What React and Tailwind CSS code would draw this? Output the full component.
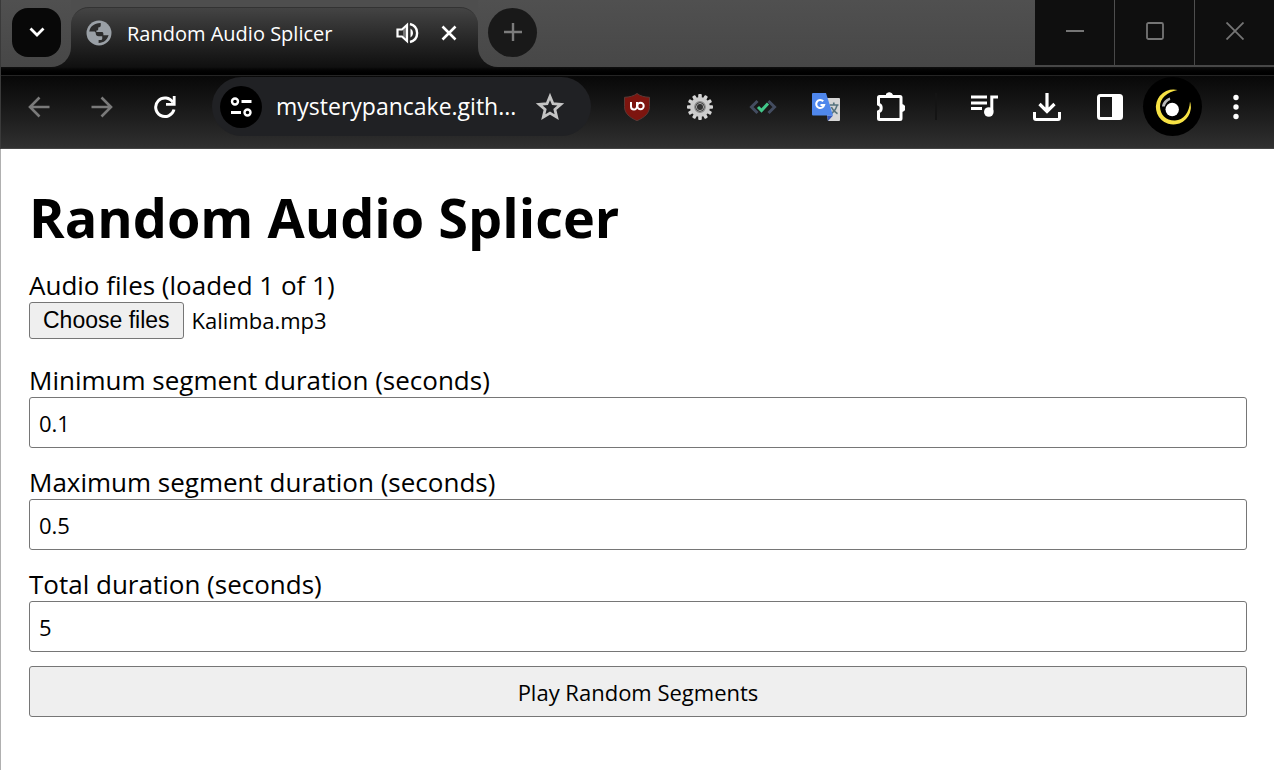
import { useRef } from "react";

function Icon({ size = 24, children, className = "" }) {
  return (
    <svg
      width={size}
      height={size}
      viewBox={`0 0 ${size} ${size}`}
      fill="none"
      stroke="currentColor"
      className={`shrink-0 ${className}`}
      aria-hidden="true"
    >
      {children}
    </svg>
  );
}

function ToolButton({ label, children, className = "text-white" }) {
  return (
    <button
      type="button"
      aria-label={label}
      className={`flex h-[59px] w-[63px] shrink-0 items-center justify-center ${className}`}
    >
      {children}
    </button>
  );
}

function WindowButton({ label, children }) {
  return (
    <button
      type="button"
      aria-label={label}
      className="flex h-[65px] flex-1 items-center justify-center bg-[#0f0f0f] pb-1 text-[#757575]"
    >
      {children}
    </button>
  );
}

function TabStrip() {
  return (
    <div className="flex h-[67px] bg-[linear-gradient(to_bottom,#444444_7px,#101010_67px)]">
      <div className="w-[70px] shrink-0 rounded-br-[20px] bg-linear-to-b from-[#505050] to-[#474747] pt-2 pl-[11px]">
        <button
          type="button"
          aria-label="Search tabs"
          className="flex size-[49px] items-center justify-center rounded-[16px] bg-[#080808] pb-px text-white"
        >
          <Icon size={18}>
            <path d="M2.500 5.500l6.500 6.500 6.500-6.500" strokeWidth="2.800" />
          </Icon>
        </button>
      </div>

      <div className="w-[407px] shrink-0 bg-[linear-gradient(to_bottom,#4e4e4e_30px,#101010_31px)] pt-[7px]">
        <div className="flex h-[60px] items-center rounded-t-[18px] border-t border-[#333333] bg-linear-to-b from-[#444444] to-[#101010] pr-[20px] pb-[9px] pl-[13px]">
          <svg width="30" height="30" viewBox="0 0 24 24" className="shrink-0" aria-hidden="true">
            <circle cx="12" cy="12" r="10" fill="#9aa0a6" />
            <path
              fill="#2c2c2c"
              d="M4.200 10.800C4.900 6.800 8.500 3.900 13.400 4.100v1.600c0 1.100-.8 1.800-2 1.800v1.300c0 .8-.6 1.200-1.500 1.200v1.200h4.300c.8 0 1.300.5 1.300 1.300v1.200c1.400 0 2.600.2 4.100-.2-.8 3.700-3.700 6.300-7.900 6.400v-2.400h1.700c.8 0 1.200-.5 1.200-1.200v-1.800h-2.800c-1.600 0-2.400-.8-2.400-2.300 0-.9-.6-1.400-1.500-1.400z"
            />
          </svg>
          <span className="ml-[13px] flex-1 truncate pt-[2px] font-['Open_Sans','Noto_Sans',sans-serif] text-[20px] text-white">
            Random Audio Splicer
          </span>
          <button type="button" aria-label="Mute tab" className="text-white">
            <Icon size={24}>
              <path d="M2.500 8.500h4.500l5-4.500v16l-5-4.500H2.500z" strokeWidth="2.200" />
              <path d="M8 8.700l4.500-4.500v15.600L8 15.300z" fill="currentColor" fillOpacity=".35" stroke="none" />
              <path d="M15.500 7.500c3.300 2 3.300 7 0 9z" fill="currentColor" stroke="none" />
              <path d="M15 3c9.500 2.500 9.500 15.500 0 18" strokeWidth="2.400" />
            </Icon>
          </button>
          <button type="button" aria-label="Close tab" className="ml-[21px] text-white">
            <Icon size={18}>
              <path d="M2.500 2.500l13 13M15.500 2.500l-13 13" strokeWidth="2.600" />
            </Icon>
          </button>
        </div>
      </div>

      <div className="flex flex-1 justify-between rounded-bl-[20px] bg-linear-to-b from-[#505050] to-[#474747]">
        <button
          type="button"
          aria-label="New tab"
          className="mt-2 ml-[10px] flex size-[49px] items-center justify-center rounded-full bg-[#191919] pb-px text-[#7c7c7c]"
        >
          <Icon size={20}>
            <path d="M10 1v18M1 10h18" strokeWidth="2.400" />
          </Icon>
        </button>
        <div className="flex w-[239px] gap-px">
          <WindowButton label="Minimize">
            <Icon size={18}>
              <path d="M0 9h18" strokeWidth="2" />
            </Icon>
          </WindowButton>
          <WindowButton label="Maximize">
            <Icon size={18}>
              <rect x="1" y="1" width="16" height="16" rx="1.500" strokeWidth="1.800" />
            </Icon>
          </WindowButton>
          <WindowButton label="Close">
            <Icon size={18}>
              <path d="M.5.5l17 17M17.500.5l-17 17" strokeWidth="1.800" />
            </Icon>
          </WindowButton>
        </div>
      </div>
    </div>
  );
}

const gearTeeth = Array.from({ length: 12 }, (_, i) => i * 30);

function Toolbar() {
  return (
    <div className="flex h-[74px] items-start border-t border-b border-t-[#242424] border-b-[#444444] bg-linear-to-b from-[#080808] to-[#303030] pt-px pr-[7px] pl-[6px]">
      <ToolButton label="Back" className="text-[#7a7a7a]">
        <Icon size={24}>
          <path d="M22.500 12H3M12.500 2.500L3 12l9.500 9.500" strokeWidth="2.600" />
        </Icon>
      </ToolButton>
      <ToolButton label="Forward" className="text-[#7a7a7a]">
        <Icon size={24}>
          <path d="M1.500 12H21M11.500 2.500L21 12l-9.500 9.500" strokeWidth="2.600" />
        </Icon>
      </ToolButton>
      <ToolButton label="Reload">
        <Icon size={24}>
          <path d="M21 14.500A9.300 9.300 0 1 1 20 7.500" strokeWidth="3" />
          <path d="M21.200 1v8.400H13" strokeWidth="2.800" />
        </Icon>
      </ToolButton>

      <div className="mr-[14px] ml-[16px] flex h-[59px] min-w-0 flex-1 items-center rounded-full bg-[#202124] pr-[26px] pl-[8px]">
        <button
          type="button"
          aria-label="View site information"
          className="flex size-[42px] shrink-0 items-center justify-center rounded-full bg-black text-white"
        >
          <Icon size={24}>
            <circle cx="6" cy="6.500" r="3" strokeWidth="2.400" />
            <path d="M12.500 6.500h10M2 17.500h10" strokeWidth="2.800" />
            <circle cx="18.500" cy="17.500" r="3" strokeWidth="2.400" />
          </Icon>
        </button>
        <input
          type="text"
          aria-label="Address"
          defaultValue="mysterypancake.gith..."
          className="ml-[14px] min-w-0 flex-1 bg-transparent font-['Open_Sans','Noto_Sans',sans-serif] text-[23px] text-white outline-none"
        />
        <button type="button" aria-label="Bookmark this page" className="text-[#c4c4c4]">
          <Icon size={30}>
            <path
              d="M15 4.500l3 7.200 7.800.7-5.900 5.100 1.800 7.600-6.700-4-6.700 4 1.800-7.600-5.900-5.100 7.800-.7z"
              strokeWidth="2.800"
            />
          </Icon>
        </button>
      </div>

      <ToolButton label="uBlock Origin">
        <Icon size={28}>
          <path
            d="M14 .5c3.500 2.600 7.500 3.600 12.500 3.800v9.200c0 7-5 10.800-12.500 14.200C6.500 24.300 1.500 20.500 1.500 13.500V4.300C6.500 4.100 10.500 3.100 14 .5z"
            fill="#7d150f"
            stroke="#5a3835"
            strokeWidth="1"
          />
          <path d="M8 9v4.500a3 3 0 0 0 6 0V9" strokeWidth="2" />
          <circle cx="17.500" cy="13" r="3.200" strokeWidth="2" />
        </Icon>
      </ToolButton>
      <ToolButton label="Settings extension">
        <Icon size={28}>
          <g fill="#d4d4d4" stroke="none">
            {gearTeeth.map((angle) => (
              <rect key={angle} x="12.200" y="1" width="3.600" height="6" rx="1" transform={`rotate(${angle} 14 14)`} />
            ))}
          </g>
          <circle cx="14" cy="14" r="7.500" stroke="#cccccc" strokeWidth="5" />
          <circle cx="14" cy="14" r="5.200" stroke="#8c8c8c" strokeWidth="1.400" />
          <circle cx="14" cy="14" r="3.600" fill="#303030" stroke="#a8a8a8" strokeWidth="1" />
        </Icon>
      </ToolButton>
      <ToolButton label="Code checker">
        <Icon size={28}>
          <path d="M8.500 8L2.500 14l6 6M19.500 8l6 6-6 6" stroke="#434c60" strokeWidth="3" />
          <path d="M9 14l3.500 3.500 6.500-7" stroke="#42c78a" strokeWidth="3" />
        </Icon>
      </ToolButton>
      <ToolButton label="Translate">
        <Icon size={28}>
          <path d="M12 5h15a1 1 0 0 1 1 1v21a1 1 0 0 1-1 1H16z" fill="#d6d6d6" stroke="none" />
          <path d="M15 22.500h6L16 28z" fill="#3354b8" stroke="none" />
          <path
            d="M17.500 12h9M21.800 9.500V12M25 12c-.5 3.500-3 6.500-5.500 8.500M19.300 14c1.500 3.300 3.500 5.300 6.200 6.800"
            stroke="#56737d"
            strokeWidth="1.700"
          />
          <path d="M1 0h13l7 22.500H1a1 1 0 0 1-1-1V1a1 1 0 0 1 1-1z" fill="#4f87ec" stroke="none" />
          <path d="M11.200 8.300a4 4 0 1 0 .9 3.700H8.500" stroke="#ffffff" strokeWidth="2.100" />
        </Icon>
      </ToolButton>
      <ToolButton label="Extensions">
        <Icon size={32}>
          <path
            d="M6.500 5.500H27a1 1 0 0 1 1 1v21a1 1 0 0 1-1 1H6.500a1 1 0 0 1-1-1v-6.700c3.600-1 3.600-6.600 0-7.600V6.500a1 1 0 0 1 1-1z"
            strokeWidth="3"
          />
          <path d="M13 5a3.300 3.300 0 0 1 6.600 0zM28.500 13.500a3.500 3.500 0 0 1 0 7z" fill="currentColor" strokeWidth="1" />
        </Icon>
      </ToolButton>
      <div className="flex h-[59px] w-[32px] shrink-0 items-center justify-center">
        <div className="h-[27px] w-[2px] bg-[#141414]" />
      </div>
      <ToolButton label="Media controls">
        <Icon size={28}>
          <path d="M1 4h16M1 10h16M1 15.500h11" strokeWidth="2.800" />
          <path d="M21.800 18.500V4H28" strokeWidth="3" />
          <circle cx="18.800" cy="19" r="4.800" fill="currentColor" stroke="none" />
        </Icon>
      </ToolButton>
      <ToolButton label="Downloads">
        <Icon size={30}>
          <path d="M15 1v18M7.500 12l7.500 7.500 7.500-7.500" strokeWidth="3.200" />
          <path d="M2.500 20v6a1.500 1.500 0 0 0 1.500 1.500h22a1.500 1.500 0 0 0 1.500-1.500v-6" strokeWidth="3" />
        </Icon>
      </ToolButton>
      <ToolButton label="Side panel">
        <Icon size={28}>
          <rect x="2.500" y="2.500" width="23" height="23" rx="2" strokeWidth="3" />
          <path d="M16 2h9v24h-9z" fill="currentColor" stroke="none" />
        </Icon>
      </ToolButton>
      <ToolButton label="Profile">
        <span className="flex size-[59px] items-center justify-center rounded-full bg-black">
          <Icon size={36}>
            <path
              d="M22.500 1A17.500 17.500 0 1 0 35 12.500C34.500 23.500 28.500 31.300 20 31.500 11 31.700 5 25.500 5 17.500 5 9.500 12 2.800 22.500 1z"
              fill="#f7e244"
              stroke="none"
            />
            <circle cx="17.200" cy="20.500" r="6.700" fill="#ffffff" stroke="none" />
            <path d="M7 17.500c.5-4.200 3.300-7.500 7.800-9l.5 2.600c-2.800 1.200-4.700 3.400-5.500 6.400z" fill="#b8b8b8" stroke="none" />
          </Icon>
        </span>
      </ToolButton>
      <ToolButton label="Menu">
        <Icon size={28}>
          <g fill="currentColor" stroke="none">
            <circle cx="14" cy="4.500" r="2.700" />
            <circle cx="14" cy="14" r="2.700" />
            <circle cx="14" cy="23.500" r="2.700" />
          </g>
        </Icon>
      </ToolButton>
    </div>
  );
}

function Field({ id, label, value }) {
  return (
    <div className="flex flex-col">
      <label htmlFor={id} className="pt-[3px] text-[26px] leading-[34px]">
        {label}
      </label>
      <input
        id={id}
        type="text"
        inputMode="decimal"
        defaultValue={value}
        className="h-[51px] w-full rounded-[3px] border border-[#767676] bg-white px-[9px] pt-px text-[22px]"
      />
    </div>
  );
}

export default function App() {
  const fileInput = useRef(null);

  return (
    <div className="flex min-h-screen flex-col bg-white">
      <header className="border-l border-[#3a3a3a] bg-[#050505]">
        <TabStrip />
        <div className="h-[8px] bg-linear-to-b from-[#101010] to-black" />
        <Toolbar />
      </header>

      <main className="flex-1 border-l border-[#b0b0b0] pr-[27px] pb-8 pl-[28px] font-['Open_Sans','Noto_Sans',sans-serif] text-black">
        <h1 className="pt-8 text-[54px] leading-[72px] font-bold">Random Audio Splicer</h1>
        <form className="mt-3 flex flex-col gap-[14px]" onSubmit={(event) => event.preventDefault()}>
          <div className="flex flex-col pb-[7px]">
            <label htmlFor="audio-files" className="pt-[3px] text-[26px] leading-[34px]">
              Audio files (loaded 1 of 1)
            </label>
            <div className="flex items-center gap-2">
              <input ref={fileInput} id="audio-files" type="file" multiple className="hidden" />
              <button
                type="button"
                onClick={() => fileInput.current.click()}
                className="h-[37px] rounded-[3px] border border-[#767676] bg-[#efefef] px-[13px] font-['Liberation_Sans',Arial,sans-serif] text-[23px] leading-[35px]"
              >
                Choose files
              </button>
              <span className="text-[22px] leading-[35px]">Kalimba.mp3</span>
            </div>
          </div>
          <Field id="min-duration" label="Minimum segment duration (seconds)" value="0.1" />
          <Field id="max-duration" label="Maximum segment duration (seconds)" value="0.5" />
          <Field id="total-duration" label="Total duration (seconds)" value="5" />
          <button
            type="submit"
            className="h-[51px] rounded-[3px] border border-[#767676] bg-[#efefef] pt-px text-[22px]"
          >
            Play Random Segments
          </button>
        </form>
      </main>
    </div>
  );
}
